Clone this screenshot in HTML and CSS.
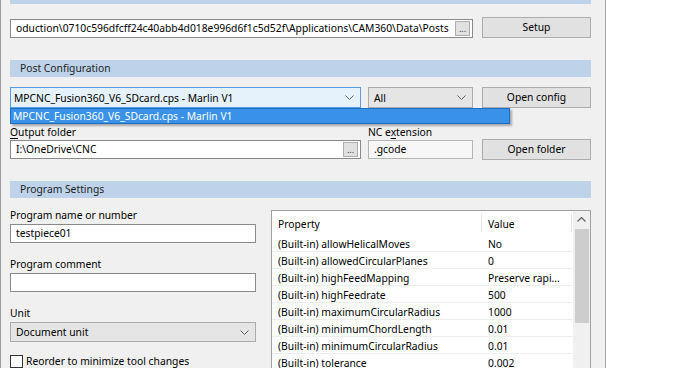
FILE: index.html
```html
<!DOCTYPE html>
<html>
<head>
<meta charset="utf-8">
<link rel="stylesheet" href="styles.css">
</head>
<body>
<div class="window">
  <div class="group-head group-head--cut"></div>

  <div class="row row-path">
    <div class="field field-path">
      <span class="field-text">oduction\0710c596dfcff24c40abb4d018e996d6f1c5d52f\Applications\CAM360\Data\Posts</span>
      <span class="browse">...</span>
    </div>
    <div class="btn">Setup</div>
  </div>

  <div class="group-head">Post Configuration</div>

  <div class="row row-post">
    <div class="combo combo-open">
      <span class="combo-text">MPCNC_Fusion360_V6_SDcard.cps - Marlin V1</span>
      <svg class="chev" width="9" height="5" viewBox="0 0 9 5"><path d="M0.5 0.5 L4.5 4.5 L8.5 0.5" fill="none" stroke="#606060" stroke-width="1"/></svg>
      <div class="droplist">
        <div class="droplist-item">MPCNC_Fusion360_V6_SDcard.cps - Marlin V1</div>
      </div>
    </div>
    <div class="combo combo-all">
      <span class="combo-text">All</span>
      <svg class="chev" width="9" height="5" viewBox="0 0 9 5"><path d="M0.5 0.5 L4.5 4.5 L8.5 0.5" fill="none" stroke="#606060" stroke-width="1"/></svg>
    </div>
    <div class="btn">Open config</div>
  </div>

  <div class="row row-output">
    <div class="col col-output">
      <div class="label"><u>O</u>utput folder</div>
      <div class="field">
        <span class="field-text">I:\OneDrive\CNC</span>
        <span class="browse">...</span>
      </div>
    </div>
    <div class="col col-ext">
      <div class="label">NC e<u>x</u>tension</div>
      <div class="field field-disabled"><span class="field-text">.gcode</span></div>
    </div>
    <div class="btn btn-low">Open folder</div>
  </div>

  <div class="group-head group-head--settings">Program Settings</div>

  <div class="settings">
    <div class="settings-left">
      <div class="label">Program name or number</div>
      <div class="field field-wide"><span class="field-text">testpiece01</span></div>
      <div class="label label-gap">Program comment</div>
      <div class="field field-wide"></div>
      <div class="label label-gap">Unit</div>
      <div class="combo combo-unit">
        <span class="combo-text">Document unit</span>
        <svg class="chev" width="9" height="5" viewBox="0 0 9 5"><path d="M0.5 0.5 L4.5 4.5 L8.5 0.5" fill="none" stroke="#606060" stroke-width="1"/></svg>
      </div>
      <div class="check-row">
        <span class="checkbox"></span>
        <span>Reorder to minimize tool changes</span>
      </div>
    </div>

    <div class="props">
      <div class="props-grid">
        <div class="ph ph-prop">Property</div>
        <div class="ph ph-val">Value</div>
        <div class="pc">(Built-in) allowHelicalMoves</div><div class="pc pv">No</div>
        <div class="pc">(Built-in) allowedCircularPlanes</div><div class="pc pv">0</div>
        <div class="pc">(Built-in) highFeedMapping</div><div class="pc pv">Preserve rapi...</div>
        <div class="pc">(Built-in) highFeedrate</div><div class="pc pv">500</div>
        <div class="pc">(Built-in) maximumCircularRadius</div><div class="pc pv">1000</div>
        <div class="pc">(Built-in) minimumChordLength</div><div class="pc pv">0.01</div>
        <div class="pc">(Built-in) minimumCircularRadius</div><div class="pc pv">0.01</div>
        <div class="pc">(Built-in) tolerance</div><div class="pc pv">0.002</div>
      </div>
      <div class="scrollbar">
        <div class="sb-btn">
          <svg width="9" height="5" viewBox="0 0 9 5"><path d="M0.5 4.5 L4.5 0.5 L8.5 4.5" fill="none" stroke="#606060" stroke-width="1.2"/></svg>
        </div>
        <div class="sb-thumb"></div>
      </div>
    </div>
  </div>
</div>
</body>
</html>
```

FILE: styles.css
```css
html, body {
  margin: 0;
  padding: 0;
  background: #ffffff;
}

.window {
  width: 606px;
  height: 368px;
  box-sizing: border-box;
  border-left: 1px solid #9a9a9a;
  border-right: 1px solid #a8a8a8;
  background: #f0f0f0;
  padding: 0 14px 0 9px;
  overflow: hidden;
  font-family: "Noto Sans", "Open Sans", sans-serif;
  font-size: 10.3px;
  color: #000;
}

.group-head {
  height: 17px;
  line-height: 17px;
  background: #bed3ea;
  padding-left: 10px;
  color: #1e1e1e;
  margin-top: 22px;
}

.group-head--cut {
  height: 4px;
  margin-top: 0;
}

.group-head--settings {
  margin-top: 22px;
}

.row {
  display: flex;
  align-items: flex-start;
}

.row-path {
  margin-top: 13px;
  gap: 9px;
}

.field {
  box-sizing: border-box;
  height: 19px;
  border: 1px solid #8a8a8a;
  background: #fff;
  display: flex;
  align-items: center;
  padding: 0 2px 0 5px;
  white-space: nowrap;
  overflow: hidden;
  line-height: 17px;
}

.field-text {
  flex: 1;
  overflow: hidden;
}

.field-path {
  width: 463px;
  margin-top: 2px;
}

.browse {
  box-sizing: border-box;
  width: 15px;
  height: 15px;
  border: 1px solid #adadad;
  background: #e1e1e1;
  font-size: 9px;
  line-height: 14px;
  text-align: center;
  color: #333;
  flex: none;
}

.btn {
  box-sizing: border-box;
  width: 109px;
  height: 21px;
  border: 1px solid #adadad;
  background: #e1e1e1;
  text-align: center;
  line-height: 19px;
  flex: none;
}

.row-post {
  margin-top: 10px;
  gap: 7px;
}

.row-post .btn {
  margin-left: 2px;
}

.combo {
  position: relative;
  box-sizing: border-box;
  height: 21px;
  border: 1px solid #acacac;
  background: #e5e5e5;
  display: flex;
  align-items: center;
  padding: 0 6px 0 3px;
  white-space: nowrap;
}

.combo-text {
  flex: 1;
  overflow: hidden;
}

.chev {
  flex: none;
  margin-left: 4px;
}

.combo-open {
  width: 351px;
  background: #e5f1fb;
  border-color: #569de5;
}

.combo-all {
  width: 105px;
  padding-left: 5px;
}

.droplist {
  position: absolute;
  left: -1px;
  top: 20px;
  width: 500px;
  height: 16px;
  box-sizing: border-box;
  border: 1px solid #1d6fc4;
  background: #3992e8;
  box-shadow: 2px 2px 2px rgba(0, 0, 0, 0.3);
  z-index: 2;
}

.droplist-item {
  color: #fff;
  line-height: 14px;
  padding-left: 2px;
}

.row-output {
  margin-top: 16px;
  align-items: flex-end;
}

.col {
  display: flex;
  flex-direction: column;
}

.col-output {
  width: 351px;
}

.col-ext {
  width: 105px;
  margin-left: 7px;
}

.label {
  line-height: 16px;
  height: 16px;
  white-space: nowrap;
}

.label u {
  text-decoration-thickness: 1px;
  text-underline-offset: 2px;
}

.field-disabled {
  background: #f7f7f7;
  border-color: #b5b5b5;
}

.btn-low {
  margin-left: 9px;
  height: 21px;
  margin-bottom: -1px;
}

.settings {
  display: flex;
  align-items: flex-start;
  gap: 15px;
}

.settings-left {
  width: 246px;
  padding-top: 9px;
  display: flex;
  flex-direction: column;
}

.settings-left .label {
  margin-bottom: 1px;
}

.label-gap {
  margin-top: 13px;
}

.field-wide {
  width: 246px;
}

.combo-unit {
  width: 246px;
  height: 20px;
  padding-left: 5px;
}

.check-row {
  display: flex;
  align-items: center;
  gap: 3px;
  margin-top: 12px;
  white-space: nowrap;
  line-height: 14px;
}

.checkbox {
  box-sizing: border-box;
  width: 13px;
  height: 13px;
  border: 1px solid #333;
  background: #fff;
  flex: none;
}

.props {
  width: 320px;
  height: 180px;
  margin-top: 12px;
  box-sizing: border-box;
  border: 1px solid #a0a0a0;
  background: #fff;
  display: flex;
}

.props-grid {
  flex: 1;
  display: grid;
  grid-template-columns: 210px 90px;
  grid-template-rows: 24px;
  grid-auto-rows: 17px;
  align-content: start;
}

.ph {
  position: relative;
  height: 24px;
  line-height: 26px;
  padding-left: 6px;
}

.ph::after {
  content: "";
  position: absolute;
  right: 0;
  top: 3px;
  bottom: 3px;
  width: 1px;
  background: #e5e5e5;
}

.pc {
  box-sizing: border-box;
  height: 17px;
  line-height: 19px;
  padding-left: 6px;
  border-bottom: 1px solid #ededed;
  white-space: nowrap;
  overflow: hidden;
}

.scrollbar {
  width: 17px;
  flex: none;
  background: #f0f0f0;
  display: flex;
  flex-direction: column;
  align-items: center;
}

.sb-btn {
  height: 17px;
  width: 17px;
  display: flex;
  align-items: center;
  justify-content: center;
}

.sb-thumb {
  margin-top: 1px;
  width: 14px;
  height: 94px;
  background: #cdcdcd;
}
```
